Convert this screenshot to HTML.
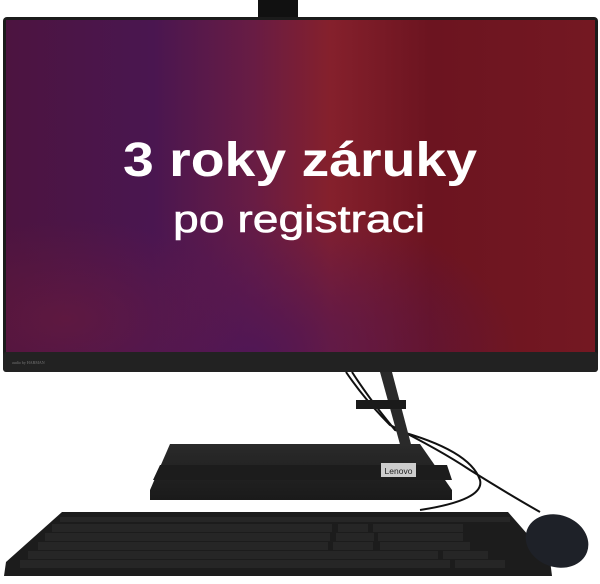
<!DOCTYPE html>
<html><head><meta charset="utf-8"><style>
html,body{margin:0;padding:0;background:#fff;width:600px;height:584px;overflow:hidden}
</style></head><body>
<svg width="600" height="584" viewBox="0 0 600 584" xmlns="http://www.w3.org/2000/svg">
<defs>
<linearGradient id="scr" x1="0" y1="0" x2="1" y2="0">
<stop offset="0" stop-color="#4c1440"/>
<stop offset="0.25" stop-color="#4a1650"/>
<stop offset="0.42" stop-color="#681c44"/>
<stop offset="0.55" stop-color="#85202c"/>
<stop offset="0.72" stop-color="#6c1420"/>
<stop offset="1" stop-color="#741822"/>
</linearGradient>
<radialGradient id="glow" cx="0.42" cy="1" r="0.45">
<stop offset="0" stop-color="#4e1656" stop-opacity="0.9"/>
<stop offset="1" stop-color="#4e1656" stop-opacity="0"/>
</radialGradient>
<radialGradient id="glow2" cx="0.1" cy="0.9" r="0.3">
<stop offset="0" stop-color="#6a1a3a" stop-opacity="0.6"/>
<stop offset="1" stop-color="#6a1a3a" stop-opacity="0"/>
</radialGradient>
<linearGradient id="base" x1="0" y1="0" x2="0" y2="1">
<stop offset="0" stop-color="#2a2a2a"/><stop offset="1" stop-color="#1a1a1a"/>
</linearGradient>
</defs>
<rect x="258" y="0" width="40" height="19" fill="#111"/>
<rect x="3" y="17" width="595" height="355" rx="4" fill="#1b1b1b"/>
<rect x="6" y="20" width="589" height="332" fill="url(#scr)"/>
<rect x="6" y="20" width="589" height="332" fill="url(#glow)"/>
<rect x="6" y="20" width="589" height="332" fill="url(#glow2)"/>
<rect x="3" y="352" width="595" height="20" rx="3" fill="#222"/>
<text x="12" y="364" font-family="Liberation Serif,serif" font-size="4" fill="#777">audio by HARMAN</text>
<text x="300" y="176" text-anchor="middle" font-family="Liberation Sans,sans-serif" font-weight="bold" font-size="48" fill="#fff" textLength="354" lengthAdjust="spacingAndGlyphs">3 roky záruky</text>
<text x="299" y="232" text-anchor="middle" font-family="Liberation Sans,sans-serif" font-size="38" fill="#fff" stroke="#fff" stroke-width="0.6" textLength="252" lengthAdjust="spacingAndGlyphs">po registraci</text>
<path d="M346 372 Q365 400 390 425 Q440 450 470 470 Q510 495 540 512" stroke="#111" stroke-width="2" fill="none"/>
<path d="M352 372 Q370 400 395 430 Q470 450 480 480 Q485 500 420 510" stroke="#111" stroke-width="2" fill="none"/>
<polygon points="380,372 392,372 412,448 401,448" fill="#2a2a2a"/>
<rect x="356" y="400" width="50" height="9" fill="#1a1a1a"/>
<polygon points="170,444 420,444 452,490 452,500 150,500 150,490" fill="url(#base)" />
<polygon points="160,465 447,465 452,480 153,480" fill="#1c1c1c"/>
<rect x="381" y="463" width="35" height="14" fill="#ccc"/>
<text x="398.5" y="474" text-anchor="middle" font-family="Liberation Sans,sans-serif" font-size="8.5" fill="#222">Lenovo</text>
<polygon points="62,512 508,512 550,560 552,576 4,576 6,562" fill="#1c1c1c"/>
<g fill="#262626">
<rect x="60" y="517" width="450" height="5"/>
<rect x="52" y="524" width="280" height="8"/><rect x="338" y="524" width="30" height="8"/><rect x="373" y="524" width="90" height="8"/>
<rect x="45" y="533" width="285" height="8"/><rect x="336" y="533" width="38" height="8"/><rect x="378" y="533" width="85" height="8"/>
<rect x="38" y="542" width="290" height="8"/><rect x="333" y="542" width="40" height="8"/><rect x="380" y="542" width="90" height="8"/>
<rect x="28" y="551" width="410" height="8"/><rect x="443" y="551" width="45" height="8"/>
<rect x="20" y="560" width="430" height="8"/><rect x="455" y="560" width="50" height="8"/>
</g>
<ellipse cx="557" cy="541" rx="32" ry="26" transform="rotate(20 557 541)" fill="#1e2128"/>
</svg>
</body></html>
